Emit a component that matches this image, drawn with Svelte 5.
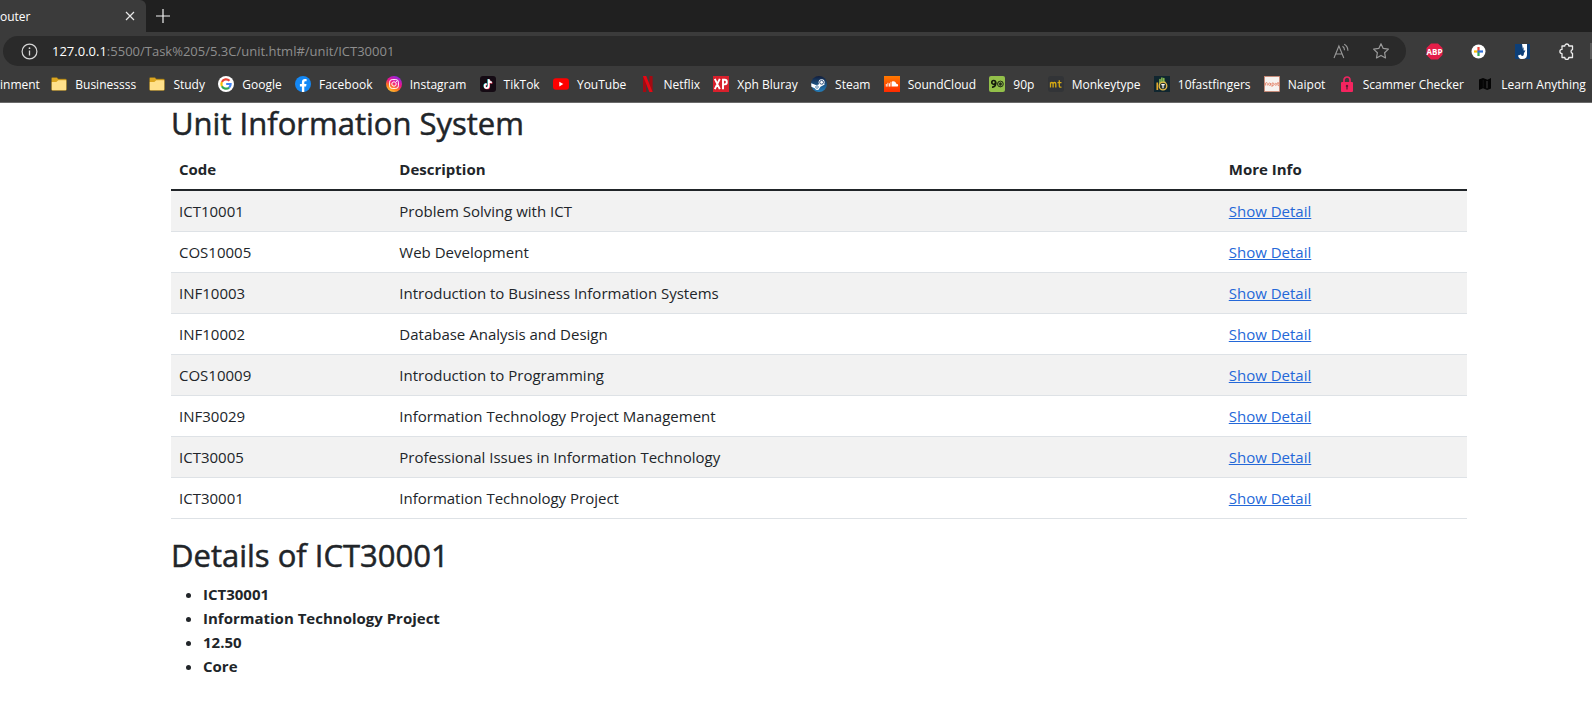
<script>
  const bookmarks = [
    { label: 'inment', icon: null },
    { label: 'Businessss', icon: 'folder' },
    { label: 'Study', icon: 'folder' },
    { label: 'Google', icon: 'google' },
    { label: 'Facebook', icon: 'facebook' },
    { label: 'Instagram', icon: 'instagram' },
    { label: 'TikTok', icon: 'tiktok' },
    { label: 'YouTube', icon: 'youtube' },
    { label: 'Netflix', icon: 'netflix' },
    { label: 'Xph Bluray', icon: 'xph' },
    { label: 'Steam', icon: 'steam' },
    { label: 'SoundCloud', icon: 'soundcloud' },
    { label: '90p', icon: 'ninety' },
    { label: 'Monkeytype', icon: 'monkeytype' },
    { label: '10fastfingers', icon: 'fingers' },
    { label: 'Naipot', icon: 'naipot' },
    { label: 'Scammer Checker', icon: 'lock' },
    { label: 'Learn Anything', icon: 'map' }
  ];

  const units = [
    { code: 'ICT10001', desc: 'Problem Solving with ICT' },
    { code: 'COS10005', desc: 'Web Development' },
    { code: 'INF10003', desc: 'Introduction to Business Information Systems' },
    { code: 'INF10002', desc: 'Database Analysis and Design' },
    { code: 'COS10009', desc: 'Introduction to Programming' },
    { code: 'INF30029', desc: 'Information Technology Project Management' },
    { code: 'ICT30005', desc: 'Professional Issues in Information Technology' },
    { code: 'ICT30001', desc: 'Information Technology Project' }
  ];

  const details = ['ICT30001', 'Information Technology Project', '12.50', 'Core'];
</script>

{#snippet favicon(name)}
  <svg class="favicon" viewBox="0 0 16 16" aria-hidden="true">
    {#if name === 'folder'}
      <path d="M.5 2.500q0-1 1-1h4.300l1.700 1.500h7q1 0 1 1v9.500q0 1-1 1h-13q-1 0-1-1z" fill="#dba520" stroke="#7d6420" stroke-width=".6" />
      <path d="M.8 6h4.500l2-1.800h7.900v9.300q0 .7-.7.7h-13q-.7 0-.7-.7z" fill="#ffe08a" />
    {:else if name === 'google'}
      <circle cx="8" cy="8" r="8" fill="#fff" />
      <g fill="none" stroke-width="2.200">
        <path d="M11.500 4.800A4.700 4.700 0 0 0 3.900 5.900" stroke="#ea4335" />
        <path d="M3.900 5.900a4.700 4.700 0 0 0 0 4.300" stroke="#fbbc05" />
        <path d="M3.900 10.200a4.700 4.700 0 0 0 7.200 1.400" stroke="#34a853" />
        <path d="M11.100 11.600A4.600 4.600 0 0 0 12.600 8H8.200" stroke="#4285f4" />
      </g>
    {:else if name === 'facebook'}
      <circle cx="8" cy="8" r="8" fill="#1488f5" />
      <path d="M6.900 16v-5.600H4.900V8h2V6.200c0-2 1.200-3.100 3-3.100.9 0 1.700.1 1.700.1v2h-1c-1 0-1.300.6-1.300 1.200V8h2.200l-.4 2.400H9.300V16z" fill="#fff" />
    {:else if name === 'instagram'}
      <defs>
        <linearGradient id="ig" x1=".2" y1="1" x2=".7" y2="0">
          <stop offset="0" stop-color="#ffd23c" />
          <stop offset=".3" stop-color="#ff7a1c" />
          <stop offset=".6" stop-color="#f0138a" />
          <stop offset="1" stop-color="#8a28e8" />
        </linearGradient>
      </defs>
      <circle cx="8" cy="8" r="8" fill="url(#ig)" />
      <rect x="3.600" y="3.600" width="8.800" height="8.800" rx="2.600" fill="none" stroke="#fff" stroke-width="1" />
      <circle cx="8" cy="8" r="2.200" fill="none" stroke="#fff" stroke-width="1" />
      <circle cx="10.500" cy="5.500" r=".6" fill="#fff" />
    {:else if name === 'tiktok'}
      <rect width="16" height="16" rx="3" fill="#150b14" />
      <g fill="none" stroke-width="1.700">
        <path d="M8.300 3v6.800a2 2 0 1 1-2-2M8.300 3.200c.2 1.900 1.400 2.900 3.200 3" stroke="#25f4ee" />
        <path d="M9.200 3.600v6.800a2 2 0 1 1-2-2M9.200 3.800c.2 1.900 1.400 2.900 3.200 3" stroke="#fe2c55" />
        <path d="M8.700 3.300v6.800a2 2 0 1 1-2-2M8.700 3.500c.2 1.900 1.400 2.900 3.200 3" stroke="#fff" />
      </g>
    {:else if name === 'youtube'}
      <rect y="2.300" width="16" height="11.500" rx="3" fill="#f00" />
      <path d="M6.300 5.700v4.700l4-2.350z" fill="#fff" />
    {:else if name === 'netflix'}
      <path d="M3 0h3.200v16L3 16z" fill="#a30a12" />
      <path d="M9.400 0h3.200v16H9.400z" fill="#a30a12" />
      <path d="M3 0h3.200l6.400 16H9.400z" fill="#e50914" />
    {:else if name === 'xph'}
      <rect width="16" height="16" fill="#d9202c" />
      <g fill="none" stroke="#fff" stroke-width="1.900">
        <path d="M1.800 2.800l5 10.400M6.800 2.800l-5 10.400M10 13.200V3.700h1.800c2.700 0 2.700 4.700 0 4.700H10" />
      </g>
    {:else if name === 'steam'}
      <defs>
        <linearGradient id="st" x1="0" y1="0" x2="0" y2="1">
          <stop offset="0" stop-color="#111d3c" />
          <stop offset="1" stop-color="#2580bd" />
        </linearGradient>
      </defs>
      <circle cx="8" cy="8" r="8" fill="url(#st)" />
      <path d="M.2 7.200l4.600 1.900 2.500-.4 3.200-4.100 3.200 4-4.200 2.200-1.200 1.700a2.200 2.200 0 0 1-4.200 0L.4 10.700z" fill="#fff" />
      <circle cx="10.600" cy="6.300" r="3" fill="#fff" />
      <circle cx="10.600" cy="6.300" r="1.900" fill="#fff" stroke="#1c3f6d" stroke-width=".9" />
      <circle cx="6" cy="11" r="1.300" fill="none" stroke="#1c5b91" stroke-width=".7" />
    {:else if name === 'soundcloud'}
      <defs>
        <linearGradient id="sc" x1="0" y1="0" x2="0" y2="1">
          <stop offset="0" stop-color="#ff7a00" />
          <stop offset="1" stop-color="#ff2a00" />
        </linearGradient>
      </defs>
      <rect width="16" height="16" fill="url(#sc)" />
      <path d="M2.300 8v2.600M3.900 6.800v3.800M5.500 7.300v3.300M7 5.800v4.800" stroke="#fff" stroke-width=".9" />
      <path d="M8 5.600c2-1 4 .2 4.200 2.100 2.400-.3 2.600 2.900.6 2.900H8z" fill="#fff" />
    {:else if name === 'ninety'}
      <rect width="16" height="16" rx="2" fill="#93c04a" />
      <circle cx="4.700" cy="6.400" r="1.900" fill="none" stroke="#131a0b" stroke-width="1.700" />
      <path d="M6.700 6.500c.1 3-1.100 4.800-3.700 4.600" fill="none" stroke="#131a0b" stroke-width="1.700" />
      <circle cx="11.400" cy="8" r="2.900" fill="#8fae5b" stroke="#243313" stroke-width="1" />
      <path d="M11.400 6.600l1.300 1-.5 1.600h-1.600l-.5-1.600zM9 6l1 .6M13.800 6l-1 .6M11.400 11V9.500" fill="#243313" stroke="#243313" stroke-width=".6" />
    {:else if name === 'monkeytype'}
      <rect width="16" height="16" rx="3" fill="#323437" />
      <path d="M2.500 11.500V6.200M2.500 8c0-2 2.600-2 2.600 0v3.500M5.100 8c0-2 2.700-2 2.700 0v3.500M11.300 4.300v5.600c0 1.200.8 1.500 2.200 1.200M9.500 6.700h4" fill="none" stroke="#d9ab13" stroke-width="1.300" />
    {:else if name === 'fingers'}
      <rect width="16" height="16" fill="#10262f" />
      <path d="M6 6.500V3.500M7.900 6V2M9.800 6V2.500" stroke="#8cc152" stroke-width="1.500" stroke-linecap="round" />
      <path d="M5 5.500h6.500v4H5z" fill="#7fae4d" />
      <path d="M3.300 6.500V14" stroke="#e2a92b" stroke-width="1.700" />
      <circle cx="9" cy="10" r="3.800" fill="#28382f" stroke="#e6bd4a" stroke-width="1.300" />
      <path d="M7.300 8.700h3.400M9 8.700v3.500" stroke="#fff" stroke-width="1.200" />
    {:else if name === 'naipot'}
      <rect x=".5" y=".5" width="15" height="15" fill="#f7f3f0" stroke="#d98870" stroke-width=".7" />
      <g fill="none" stroke="#e58c73" stroke-width=".9">
        <path d="M1.500 9.500V7q1.800-1.300 1.800.5v2M6.500 7v2.500M6.500 8.200a1 1.200 0 1 0-2 0 1 1.200 0 0 0 2 0M8 11V7q2-.6 2 1.200T8 9.500" />
        <circle cx="11.800" cy="8.300" r="1" />
        <path d="M14 6v3.600h1M13.200 7.200h2" />
      </g>
    {:else if name === 'lock'}
      <path d="M5 7V4a3 3 0 0 1 6 0v3" fill="none" stroke="#ec2560" stroke-width="1.700" />
      <rect x="2" y="6" width="12" height="10" rx="1" fill="#f5245f" />
      <path d="M8 8.700a1.300 1.300 0 0 1 .6 2.400V13.500H7.400v-2.400A1.300 1.300 0 0 1 8 8.700z" fill="#571a30" />
    {:else if name === 'map'}
      <path d="M2 3.500L6 2l4.500 1.700L14 2v10.500L10.200 14 6 12.300 2 14z" fill="#050505" />
      <path d="M10 5v7.200" stroke="#3b3b3b" stroke-width="1.100" />
      <path d="M6.200 4v7.500" stroke="#1e1e1e" stroke-width=".7" />
    {/if}
  </svg>
{/snippet}

<div class="browser">
  <div class="tabs">
    <div class="tab">
      <span>outer</span>
      <button aria-label="Close tab">
        <svg width="10" height="10" viewBox="0 0 10 10"><path d="M1 1l8 8M9 1L1 9" stroke="#e8e8e8" stroke-width="1.200" /></svg>
      </button>
    </div>
    <button class="new-tab" aria-label="New tab">
      <svg width="14" height="14" viewBox="0 0 14 14"><path d="M7 0v14M0 7h14" stroke="#f2f2f2" stroke-width="1.200" /></svg>
    </button>
  </div>

  <div class="toolbar">
    <div class="address">
      <button aria-label="Site information">
        <svg width="17" height="17" viewBox="0 0 17 17">
          <circle cx="8.500" cy="8.500" r="7.400" fill="none" stroke="#d6d6d6" stroke-width="1.200" />
          <path d="M8.500 7.500v5" stroke="#d6d6d6" stroke-width="1.300" />
          <circle cx="8.500" cy="5.200" r=".9" fill="#d6d6d6" />
        </svg>
      </button>
      <div class="url"><b>127.0.0.1</b>:5500/Task%205/5.3C/unit.html#/unit/ICT30001</div>
      <button aria-label="Read aloud">
        <svg width="17" height="17" viewBox="0 0 17 17" fill="none" stroke="#9a9a9a" stroke-width="1.100">
          <path d="M1 15L5.900 3l4.900 12M2.700 11h6.400M9.500 3.200q2 1.300 2 4M11.200 1.200q3.700 2 3.700 6.600" />
        </svg>
      </button>
      <button class="star" aria-label="Add to favorites">
        <svg width="18" height="18" viewBox="0 0 18 18">
          <path d="M9 1.700l2.200 4.700 5.200.7-3.800 3.600.9 5.200L9 13.400l-4.500 2.500.9-5.200L1.600 7.100l5.200-.7z" fill="none" stroke="#9a9a9a" stroke-width="1.200" stroke-linejoin="round" />
        </svg>
      </button>
    </div>
    <div class="extensions">
      <button aria-label="Adblock Plus">
        <svg width="17" height="17" viewBox="0 0 17 17">
          <path d="M5 .5h7L16.500 5v7L12 16.500H5L.5 12V5z" fill="#e41e49" />
          <text x="8.500" y="11.500" text-anchor="middle">ABP</text>
        </svg>
      </button>
      <button aria-label="Plus extension">
        <svg width="17" height="17" viewBox="0 0 17 17">
          <circle cx="8.500" cy="8.500" r="7" fill="#fff" />
          <g stroke-width="2.200">
            <path d="M8.500 4v4.500" stroke="#ea4335" />
            <path d="M8.500 8.500V13" stroke="#34a853" />
            <path d="M4 8.500h3.400" stroke="#fbbc05" />
            <path d="M7.400 8.500H13" stroke="#2f6fd8" />
          </g>
        </svg>
      </button>
      <button aria-label="J extension">
        <svg width="17" height="17" viewBox="0 0 17 17">
          <path d="M1 1h15v15H1z" fill="#0d3f78" />
          <path d="M8 1h5v10.500q0 4.500-4.700 4.500-3.700 0-4.300-3.600l3-1q.3 1.500 1.300 1.500 1.500 0 1.500-1.700z" fill="#fff" />
          <path d="M9.700 4L7 9h2l-.5 3.500L11.500 7.500h-2z" fill="#0d3f78" />
        </svg>
      </button>
      <button aria-label="Extensions">
        <svg width="17" height="17" viewBox="0 0 17 17">
          <path d="M4 3h2.800a2 2 0 0 1 4 0H14.500v3.600a1.900 1.900 0 0 0 0 3.700V14.500h-3.700a2 2 0 0 1-4 0H4V10.600a2.100 2.100 0 0 1 0-4.200z" fill="none" stroke="#ececec" stroke-width="1.300" stroke-linejoin="round" />
        </svg>
      </button>
    </div>
    <span class="divider"></span>
  </div>

  <nav class="bookmarks" aria-label="Bookmarks">
    {#each bookmarks as mark}
      <a href="#/" class:first={!mark.icon}>
        {#if mark.icon}{@render favicon(mark.icon)}{/if}
        <span>{mark.label}</span>
      </a>
    {/each}
  </nav>
</div>

<main>
  <h1>Unit Information System</h1>
  <table>
    <thead>
      <tr><th class="code">Code</th><th class="desc">Description</th><th>More Info</th></tr>
    </thead>
    <tbody>
      {#each units as unit}
        <tr>
          <td>{unit.code}</td>
          <td>{unit.desc}</td>
          <td><a href="#/unit/{unit.code}">Show Detail</a></td>
        </tr>
      {/each}
    </tbody>
  </table>

  <h2>Details of ICT30001</h2>
  <ul>
    {#each details as item}
      <li>{item}</li>
    {/each}
  </ul>
</main>

<style>
  :global(body) {
    margin: 0;
    background: #fff;
    color: #212529;
    font-family: 'Segoe UI', 'Open Sans', 'Noto Sans', sans-serif;
  }

  button {
    display: flex;
    padding: 0;
    border: 0;
    background: none;
    font: inherit;
  }

  .browser {
    overflow: hidden;
    background: #3b3b3b;
    border-bottom: 1px solid #6a6a6a;
    color: #fff;
    font-size: 12px;
  }

  .tabs {
    display: flex;
    height: 32px;
    background: #202020;
  }

  .tab {
    display: flex;
    align-items: center;
    justify-content: space-between;
    box-sizing: border-box;
    width: 146px;
    padding-right: 11px;
    border-radius: 0 6px 0 0;
    background: #3b3b3b;
  }

  .new-tab {
    align-items: center;
    padding: 0 10px;
  }

  .toolbar {
    display: flex;
    align-items: center;
    padding: 4px 0 3px 3px;
  }

  .address {
    display: flex;
    flex: 1;
    align-items: center;
    height: 30px;
    padding: 0 16px 0 18px;
    border-radius: 15px;
    background: #2a2a2a;
  }

  .url {
    flex: 1;
    padding-left: 14px;
    color: #8e8e8e;
    font-size: 13px;
  }

  .url b {
    color: #fff;
    font-weight: 500;
  }

  .star {
    margin-left: 22px;
  }

  .extensions {
    display: flex;
    gap: 27px;
    padding: 0 15px 0 20px;
  }

  .extensions text {
    fill: #fff;
    font: bold 8px 'Open Sans', sans-serif;
  }

  .divider {
    width: 2px;
    height: 16px;
    background: #5a5a5a;
  }

  .bookmarks {
    display: flex;
    justify-content: space-between;
    height: 33px;
    padding-right: 6px;
  }

  .bookmarks a {
    display: flex;
    align-items: center;
    gap: 8px;
    height: 30px;
    color: #fff;
    text-decoration: none;
    white-space: nowrap;
  }

  .bookmarks .first {
    width: 38px;
  }

  .favicon {
    width: 16px;
    height: 16px;
  }

  main {
    padding: 1px 125px 24px 171px;
    line-height: 24px;
  }

  h1,
  h2 {
    margin: 0 0 8px;
    font-size: 31px;
    font-weight: 500;
    line-height: 38px;
    -webkit-text-stroke: 0.5px currentColor;
  }

  table {
    width: 100%;
    margin-bottom: 17px;
    border-collapse: collapse;
    table-layout: fixed;
    font-size: 15px;
  }

  .code {
    width: 17%;
  }

  .desc {
    width: 64%;
  }

  th,
  td {
    box-sizing: border-box;
    padding: 8px;
    border-bottom: 1px solid #dee2e6;
    text-align: left;
  }

  th {
    padding-top: 7px;
    border-bottom: 2px solid #212529;
    font-weight: 700;
  }

  tbody tr:nth-child(odd) {
    background: #f2f2f2;
  }

  td a {
    color: #2468d8;
  }

  ul {
    margin: 0;
    padding-left: 32px;
    font-size: 15px;
    font-weight: 700;
  }
</style>
